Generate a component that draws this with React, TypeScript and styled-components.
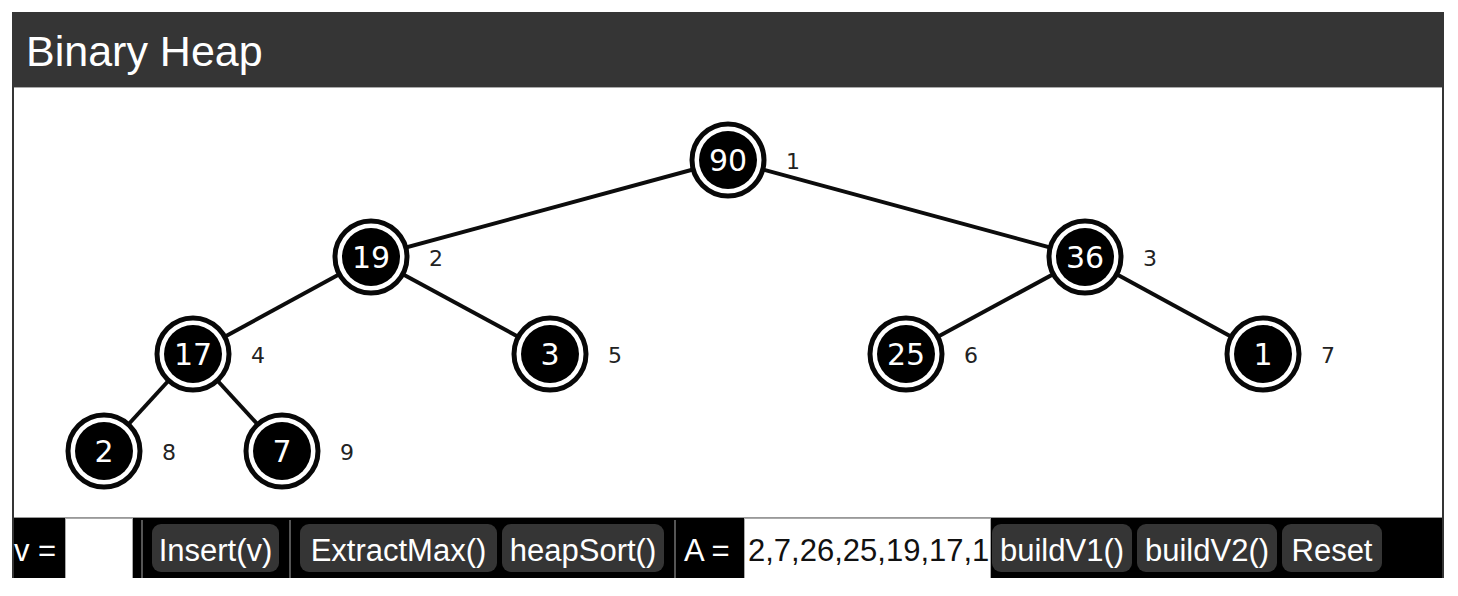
import React from "react";
import styled, { createGlobalStyle } from "styled-components";

const GlobalStyle = createGlobalStyle`
  *, *::before, *::after { box-sizing: border-box; }
  body {
    margin: 0;
    background: #fff;
    font-family: "Liberation Sans", Arial, sans-serif;
  }
`;

const Page = styled.div`
  padding: 12px 14px 12px 12px;
`;

const Window = styled.main`
  display: flex;
  flex-direction: column;
  overflow: hidden;
  background: #353535;
`;

const Header = styled.header`
  padding: 15px 14px 12px;
  color: #fff;
`;

const Title = styled.h1`
  margin: 0;
  font-size: 43px;
  line-height: 48px;
  font-weight: 400;
`;

const Canvas = styled.section`
  margin: 0 2px;
  border-top: 1px solid #aaa;
  border-bottom: 1px solid #999;
  background: #fff;
`;

const Tree = styled.svg`
  display: block;
  width: 100%;
  height: auto;
`;

const Edge = styled.line`
  stroke: #0c0c0c;
  stroke-width: 4px;
`;

const Ring = styled.circle`
  fill: #fff;
  stroke: #080808;
  stroke-width: 5px;
`;

const Disc = styled.circle`
  fill: #000;
`;

const NodeValue = styled.text`
  fill: #fff;
  font-family: "DejaVu Sans", Verdana, sans-serif;
  font-size: 30px;
  text-anchor: middle;
`;

const NodeIndex = styled.text`
  fill: #222;
  font-family: "DejaVu Sans", Verdana, sans-serif;
  font-size: 22px;
  text-anchor: middle;
`;

const Toolbar = styled.form`
  display: flex;
  align-items: center;
  height: 60px;
  margin: 0 2px;
  background: #000;
  white-space: nowrap;
`;

const FieldLabel = styled.label<{ $width: number }>`
  flex: none;
  width: ${(p) => p.$width}px;
  padding-top: 6px;
  color: #fff;
  font-size: 31px;
  line-height: 36px;
`;

const Field = styled.input<{ $width: number }>`
  flex: none;
  width: ${(p) => p.$width}px;
  height: 60px;
  padding: 4px 0 0 3px;
  border: 0 solid #aaa;
  border-width: 1px 1px 0 1px;
  border-radius: 0;
  outline: none;
  background: #fff;
  color: #111;
  font-family: inherit;
  font-size: 31px;
`;

const Separator = styled.span`
  flex: none;
  width: 2px;
  height: 58px;
  margin: 2px 8px 0;
  background: #555;
`;

const ButtonGroup = styled.div`
  display: flex;
  flex: none;
  gap: 5px;
  padding: 0 2px 0 1px;
`;

const Action = styled.button<{ $width: number }>`
  flex: none;
  width: ${(p) => p.$width}px;
  height: 48px;
  padding: 6px 0 0;
  border: 0;
  border-radius: 9px;
  background: #353535;
  color: #fff;
  font-family: inherit;
  font-size: 31px;
  line-height: 36px;
  text-align: center;
`;

type HeapNode = { value: number; x: number; y: number };

const nodes: HeapNode[] = [
  { value: 90, x: 714, y: 72 },
  { value: 19, x: 357, y: 169 },
  { value: 36, x: 1071, y: 169 },
  { value: 17, x: 179, y: 266 },
  { value: 3, x: 536, y: 266 },
  { value: 25, x: 892, y: 266 },
  { value: 1, x: 1249, y: 266 },
  { value: 2, x: 90, y: 363 },
  { value: 7, x: 268, y: 363 },
];

export default function App() {
  return (
    <>
      <GlobalStyle />
      <Page>
        <Window>
          <Header>
            <Title>Binary Heap</Title>
          </Header>
          <Canvas>
            <Tree viewBox="0 0 1428 429" role="img" aria-label="Heap tree">
              {nodes.slice(1).map((node, i) => {
                const parent = nodes[Math.floor(i / 2)];
                return (
                  <Edge key={node.value} x1={parent.x} y1={parent.y} x2={node.x} y2={node.y} />
                );
              })}
              {nodes.map((node, i) => (
                <g key={node.value}>
                  <Ring cx={node.x} cy={node.y} r={36} />
                  <Disc cx={node.x} cy={node.y} r={29} />
                  <NodeValue x={node.x} y={node.y + 11}>{node.value}</NodeValue>
                  <NodeIndex x={node.x + 65} y={node.y + 9}>{i + 1}</NodeIndex>
                </g>
              ))}
            </Tree>
          </Canvas>
          <Toolbar onSubmit={(e: React.FormEvent) => e.preventDefault()}>
            <FieldLabel $width={51} htmlFor="v">v =</FieldLabel>
            <Field $width={68} id="v" type="text" />
            <Separator />
            <ButtonGroup>
              <Action $width={127} type="button">Insert(v)</Action>
            </ButtonGroup>
            <Separator />
            <ButtonGroup>
              <Action $width={197} type="button">ExtractMax()</Action>
              <Action $width={162} type="button">heapSort()</Action>
            </ButtonGroup>
            <Separator />
            <FieldLabel $width={60} htmlFor="a">A =</FieldLabel>
            <Field $width={247} id="a" type="text" defaultValue="2,7,26,25,19,17,1" />
            <ButtonGroup>
              <Action $width={140} type="button">buildV1()</Action>
              <Action $width={140} type="button">buildV2()</Action>
              <Action $width={100} type="button">Reset</Action>
            </ButtonGroup>
          </Toolbar>
        </Window>
      </Page>
    </>
  );
}
